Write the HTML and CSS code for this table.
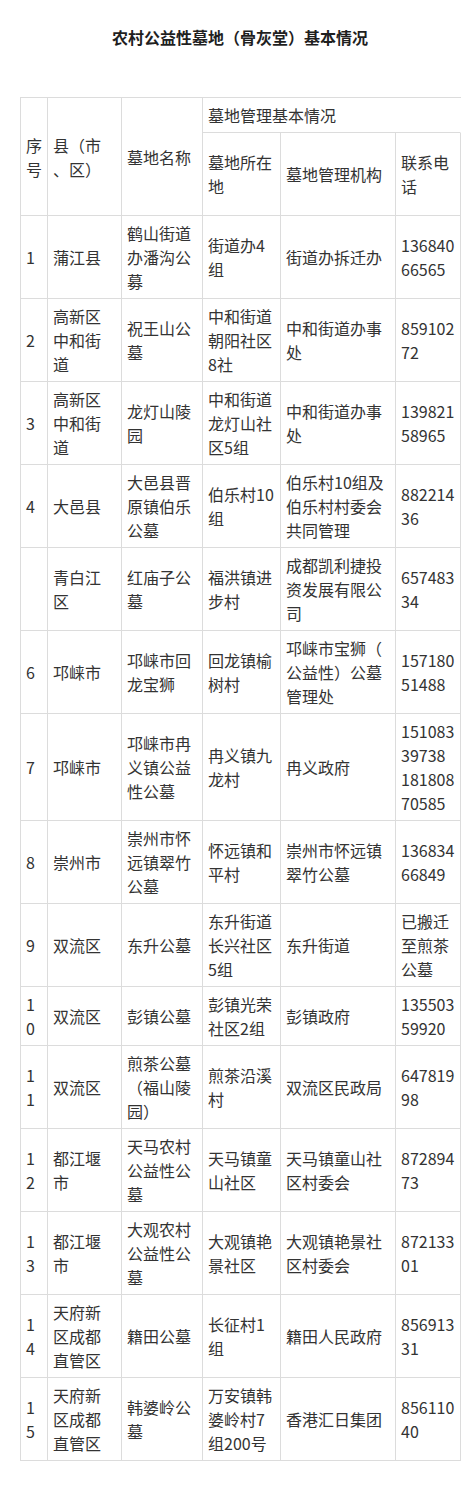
FILE: index.html
```html
<!DOCTYPE html>
<html lang="zh-CN">
<head>
<meta charset="utf-8">
<title>农村公益性墓地（骨灰堂）基本情况</title>
<link rel="stylesheet" href="styles.css">
</head>
<body>
<h1 class="title">农村公益性墓地（骨灰堂）基本情况</h1>
<table class="grid">
  <colgroup>
    <col class="c-no">
    <col class="c-county">
    <col class="c-name">
    <col class="c-loc">
    <col class="c-org">
    <col class="c-tel">
  </colgroup>
  <thead>
    <tr class="head-top">
      <th rowspan="2">序<br>号</th>
      <th rowspan="2">县（市<br>、区）</th>
      <th rowspan="2">墓地名称</th>
      <th colspan="3" class="open-right">墓地管理基本情况</th>
    </tr>
    <tr class="head-sub">
      <th>墓地所在<br>地</th>
      <th>墓地管理机构</th>
      <th>联系电<br>话</th>
    </tr>
  </thead>
  <tbody>
    <tr>
      <td>1</td><td>蒲江县</td><td>鹤山街道<br>办潘沟公<br>募</td><td>街道办4<br>组</td><td>街道办拆迁办</td><td>136840<br>66565</td>
    </tr>
    <tr>
      <td>2</td><td>高新区<br>中和街<br>道</td><td>祝王山公<br>墓</td><td>中和街道<br>朝阳社区<br>8社</td><td>中和街道办事<br>处</td><td>859102<br>72</td>
    </tr>
    <tr>
      <td>3</td><td>高新区<br>中和街<br>道</td><td>龙灯山陵<br>园</td><td>中和街道<br>龙灯山社<br>区5组</td><td>中和街道办事<br>处</td><td>139821<br>58965</td>
    </tr>
    <tr>
      <td>4</td><td>大邑县</td><td>大邑县晋<br>原镇伯乐<br>公墓</td><td>伯乐村10<br>组</td><td>伯乐村10组及<br>伯乐村村委会<br>共同管理</td><td>882214<br>36</td>
    </tr>
    <tr>
      <td></td><td>青白江<br>区</td><td>红庙子公<br>墓</td><td>福洪镇进<br>步村</td><td>成都凯利捷投<br>资发展有限公<br>司</td><td>657483<br>34</td>
    </tr>
    <tr>
      <td>6</td><td>邛崃市</td><td>邛崃市回<br>龙宝狮</td><td>回龙镇榆<br>树村</td><td>邛崃市宝狮（<br>公益性）公墓<br>管理处</td><td>157180<br>51488</td>
    </tr>
    <tr>
      <td>7</td><td>邛崃市</td><td>邛崃市冉<br>义镇公益<br>性公墓</td><td>冉义镇九<br>龙村</td><td>冉义政府</td><td>151083<br>39738<br>181808<br>70585</td>
    </tr>
    <tr>
      <td>8</td><td>崇州市</td><td>崇州市怀<br>远镇翠竹<br>公墓</td><td>怀远镇和<br>平村</td><td>崇州市怀远镇<br>翠竹公墓</td><td>136834<br>66849</td>
    </tr>
    <tr>
      <td>9</td><td>双流区</td><td>东升公墓</td><td>东升街道<br>长兴社区<br>5组</td><td>东升街道</td><td>已搬迁<br>至煎茶<br>公墓</td>
    </tr>
    <tr>
      <td>1<br>0</td><td>双流区</td><td>彭镇公墓</td><td>彭镇光荣<br>社区2组</td><td>彭镇政府</td><td>135503<br>59920</td>
    </tr>
    <tr>
      <td>1<br>1</td><td>双流区</td><td>煎茶公墓<br>（福山陵<br>园）</td><td>煎茶沿溪<br>村</td><td>双流区民政局</td><td>647819<br>98</td>
    </tr>
    <tr>
      <td>1<br>2</td><td>都江堰<br>市</td><td>天马农村<br>公益性公<br>墓</td><td>天马镇童<br>山社区</td><td>天马镇童山社<br>区村委会</td><td>872894<br>73</td>
    </tr>
    <tr>
      <td>1<br>3</td><td>都江堰<br>市</td><td>大观农村<br>公益性公<br>墓</td><td>大观镇艳<br>景社区</td><td>大观镇艳景社<br>区村委会</td><td>872133<br>01</td>
    </tr>
    <tr>
      <td>1<br>4</td><td>天府新<br>区成都<br>直管区</td><td>籍田公墓</td><td>长征村1<br>组</td><td>籍田人民政府</td><td>856913<br>31</td>
    </tr>
    <tr>
      <td>1<br>5</td><td>天府新<br>区成都<br>直管区</td><td>韩婆岭公<br>墓</td><td>万安镇韩<br>婆岭村7<br>组200号</td><td>香港汇日集团</td><td>856110<br>40</td>
    </tr>
  </tbody>
</table>
</body>
</html>
```
FILE: styles.css
```css
html, body {
  margin: 0;
  padding: 0;
  background: #ffffff;
}

body {
  font-family: "Noto Sans CJK SC", "Noto Sans", sans-serif;
  font-size: 16px;
  color: #333333;
}

.title {
  margin: 0 0 48px 0;
  padding: 25px 0 0 6px;
  font-size: 16px;
  line-height: 24px;
  font-weight: bold;
  text-align: center;
  color: #1f1f1f;
}

.grid {
  margin-left: 20px;
  width: 441px;
  table-layout: fixed;
  border-collapse: separate;
  border-spacing: 0;
  border-top: 1px solid #dcdcdc;
  border-left: 1px solid #dcdcdc;
}

.c-no { width: 27px; }
.c-county { width: 74px; }
.c-name { width: 81px; }
.c-loc { width: 78px; }
.c-org { width: 115px; }
.c-tel { width: 65px; }

.grid th,
.grid td {
  padding: 5px;
  border-right: 1px solid #dcdcdc;
  border-bottom: 1px solid #dcdcdc;
  font-weight: normal;
  font-size: 16px;
  line-height: 24px;
  text-align: left;
  vertical-align: middle;
  white-space: nowrap;
  color: #333333;
}

.grid th.open-right {
  border-right-color: transparent;
}

.head-top {
  height: 35px;
}

.head-sub {
  height: 83px;
}
```
